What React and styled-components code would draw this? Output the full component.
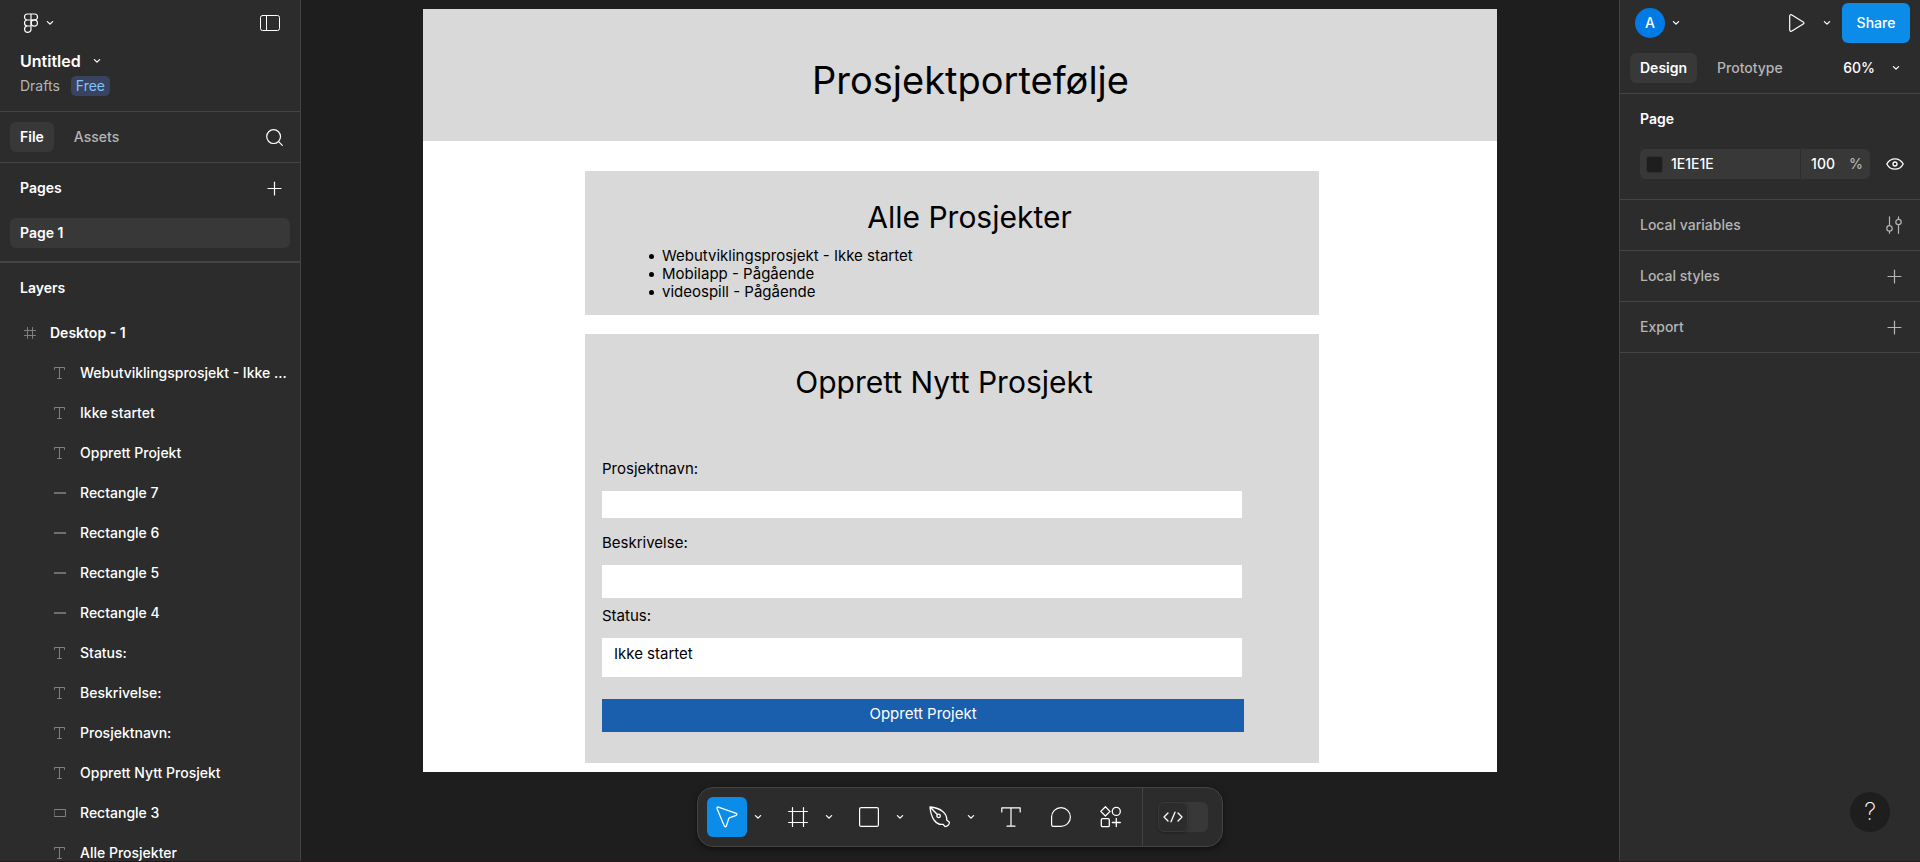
import React from "react";
import styled, { createGlobalStyle } from "styled-components";

const c = {
  panel: "#2c2c2c",
  canvas: "#1e1e1e",
  edge: "#22171c",
  line: "#444444",
  selected: "#383838",
  text: "#ffffff",
  muted: "#b5b5b5",
  faint: "#808080",
  blue: "#0c8ce9",
  avatar: "#007be5",
  block: "#d9d9d9",
  action: "#1a5fad",
};

const GlobalStyle = createGlobalStyle`
  *, *::before, *::after { box-sizing: border-box; }
  body {
    margin: 0;
    background: ${c.canvas};
    color: ${c.text};
    font: 500 14px/20px Inter, "Liberation Sans", sans-serif;
  }
  button, input, select { font: inherit; color: inherit; margin: 0; padding: 0; border: 0; background: none; }
  button { cursor: pointer; }
  h1, h2, h3, p, ul { margin: 0; padding: 0; font-size: inherit; font-weight: inherit; }
`;

/* ---------- icons ---------- */

const Svg = styled.svg`
  display: block;
  flex: none;
  fill: none;
  stroke: currentColor;
  stroke-width: ${(p) => p.$stroke || 1.2};
  stroke-linecap: round;
  stroke-linejoin: round;
`;

const Icon = ({ w, h, stroke, children }) => (
  <Svg width={w} height={h} viewBox={`0 0 ${w} ${h}`} $stroke={stroke} aria-hidden="true">
    {children}
  </Svg>
);

const Chevron = () => (
  <Icon w={8} h={6} stroke={1.3}>
    <path d="M1.400 1.600 4 4.100 6.600 1.600" />
  </Icon>
);
const Logo = () => (
  <Icon w={16} h={20}>
    <path d="M8 1H4.500a3 3 0 0 0 0 6H8zM8 1h3.500a3 3 0 0 1 0 6H8zM8 7H4.500a3 3 0 0 0 0 6H8zM4.500 13H8v3a3.200 3.200 0 1 1-3.500-3z" />
    <circle cx="11.300" cy="10" r="3.100" />
  </Icon>
);
const PanelIcon = () => (
  <Icon w={20} h={16} stroke={1}>
    <rect x="0.5" y="0.5" width="19" height="15" rx="2" />
    <path d="M6.500.5v15" />
  </Icon>
);
const SearchIcon = () => (
  <Icon w={17} h={17}>
    <circle cx="7.600" cy="7.600" r="6.900" />
    <path d="m12.600 12.600 3.700 3.700" />
  </Icon>
);
const PlusIcon = () => (
  <Icon w={15} h={15}>
    <path d="M7.500 1v13M1 7.500h13" />
  </Icon>
);
const LayerFrame = () => (
  <Icon w={12} h={12} stroke={1}>
    <path d="M3.500.5v11M8.500.5v11M.5 3.500h11M.5 8.500h11" />
  </Icon>
);
const LayerText = () => (
  <Icon w={12} h={12} stroke={1}>
    <path d="M.5 2.500v-2h10v2M5.500.5v11M3.500 11.500h4" />
  </Icon>
);
const LayerLine = () => (
  <Icon w={12} h={12} stroke={1.6}>
    <path strokeLinecap="butt" d="M0 6h12" />
  </Icon>
);
const LayerRect = () => (
  <Icon w={12} h={12} stroke={1}>
    <rect x="0.5" y="2.5" width="11" height="7" />
  </Icon>
);
const PlayIcon = () => (
  <Icon w={16} h={18}>
    <path d="M.7 2.200v13.600c0 1.300 1.200 1.900 2.200 1.300l11.300-7c1-.6 1-1.600 0-2.200L2.900.9C1.900.3.7.9.7 2.200z" />
  </Icon>
);
const EyeIcon = () => (
  <Icon w={18} h={12} stroke={1.300}>
    <path d="M.8 6C2.600 2.600 5.600.8 9 .8S15.400 2.600 17.200 6C15.400 9.400 12.400 11.200 9 11.200S2.600 9.400.8 6z" />
    <circle cx="9" cy="6" r="2" />
  </Icon>
);
const SlidersIcon = () => (
  <Icon w={16} h={18}>
    <path d="M3.500.8v8.700M3.500 15.300v2M12.500.8v2.500M12.500 9v8.300" />
    <circle cx="3.500" cy="12.400" r="2.700" />
    <circle cx="12.500" cy="6" r="2.700" />
  </Icon>
);
const CursorIcon = () => (
  <Icon w={22} h={22} stroke={1.300}>
    <path d="M2.400 1.100 20.200 7.300q1.500 1 0 2.100l-6.300 2.200q-.9.300-1.300 1.300l-2.200 7q-1 1.700-2.100 0L1 2.600Q.7.600 2.400 1.100z" />
  </Icon>
);
const FrameIcon = () => (
  <Icon w={20} h={20}>
    <path d="M4.500.6v18.800M15.500.6v18.800M.6 4.500h18.800M.6 15.500h18.800" />
  </Icon>
);
const SquareIcon = () => (
  <Icon w={20} h={20}>
    <rect x="0.600" y="0.600" width="18.800" height="18.800" rx="1.500" />
  </Icon>
);
const PenIcon = () => (
  <Icon w={22} h={22} stroke={1.300}>
    <path d="M1 1c5 .4 9.600 1.800 12.700 4.400 3.300 2.800 4.300 6 4 8.600l2.700 2.300c0 2.200-1.900 4.100-4.300 4.300L14 18.300c-3.300.5-6.600-1-9-4.300C2.600 10.500 1.400 6 1 1zM1.500 1.500l6.900 7" />
    <circle cx="9.600" cy="9.900" r="1.700" />
  </Icon>
);
const TextIcon = () => (
  <Icon w={20} h={20}>
    <path d="M.8 5V.8h18.400V5M10 .8v18.400M6 19.200h8" />
  </Icon>
);
const CommentIcon = () => (
  <Icon w={20} h={20}>
    <path d="M.6 17.800V10A9.400 9.400 0 1 1 10 19.400H2.200Q.6 19.400.6 17.800z" />
  </Icon>
);
const ActionsIcon = () => (
  <Icon w={22} h={22} stroke={1.300}>
    <path d="M5.400.8 10 5.400 5.400 10 .8 5.400zM16.300 12.500v8M12.300 16.500h8" />
    <circle cx="16.300" cy="5.400" r="4" />
    <rect x="1.300" y="12.700" width="8" height="8" rx="1.200" />
  </Icon>
);
const CodeIcon = () => (
  <Icon w={20} h={12} stroke={1.300}>
    <path d="M5 2 1 6l4 4M15 2l4 4-4 4M12 1.200 8 10.800" />
  </Icon>
);

/* ---------- shell ---------- */

const Shell = styled.div`
  display: grid;
  grid-template-columns: 301px minmax(0, 1fr) 301px;
  grid-template-rows: minmax(0, 1fr);
  height: 100vh;
  border-bottom: 1px solid ${c.edge};
  overflow: hidden;
`;

const Panel = styled.aside`
  display: flex;
  flex-direction: column;
  min-height: 0;
  overflow: hidden;
  background: ${c.panel};
  border: 0 solid ${c.line};
  border-width: ${(p) => (p.$side === "left" ? "0 1px 0 0" : "0 0 0 1px")};
`;

const Bar = styled.div`
  display: flex;
  flex: none;
  align-items: center;
  justify-content: space-between;
`;

const IconButton = styled.button`
  display: flex;
  align-items: center;
  justify-content: center;
  width: 30px;
  height: 30px;
  color: ${(p) => (p.$muted ? c.muted : c.text)};
`;

const Tab = styled.button`
  height: 30px;
  padding: 0 10px;
  border-radius: 6px;
  font-weight: ${(p) => (p.$active ? 600 : 500)};
  color: ${(p) => (p.$active ? c.text : c.muted)};
  background: ${(p) => (p.$active ? c.selected : "transparent")};
`;

const Tabs = styled.nav`
  display: flex;
  gap: 10px;
`;

const Heading = styled.h2`
  font-weight: 600;
`;

/* ---------- left panel ---------- */

const FileHeader = styled.header`
  flex: none;
  height: 112px;
  border-bottom: 1px solid ${c.line};
`;

const MenuRow = styled(Bar)`
  height: 46px;
  padding: 0 15px 0 23px;
`;

const MenuButton = styled.button`
  display: flex;
  align-items: center;
  gap: 7px;
  height: 30px;
`;

const FileName = styled.button`
  display: flex;
  align-items: center;
  gap: 12px;
  height: 30px;
  padding: 0 20px;
  font-size: 16px;
  font-weight: 600;
`;

const FileMeta = styled.div`
  display: flex;
  align-items: center;
  gap: 11px;
  padding: 0 20px;
  font-weight: 400;
  color: ${c.muted};
`;

const Badge = styled.span`
  padding: 0 5px;
  border-radius: 5px;
  background: #394360;
  color: #7cc4f8;
`;

const TabRow = styled(Bar)`
  height: 51px;
  padding: 0 11px 0 10px;
  border-bottom: 1px solid ${c.line};
`;

const Pages = styled.section`
  flex: none;
  padding: 10px 10px 13px;
  border-bottom: 2px solid ${c.line};
`;

const PagesHead = styled(Bar)`
  height: 30px;
  padding: 0 1px 0 10px;
  margin-bottom: 15px;
`;

const PageRow = styled.button`
  width: 100%;
  height: 30px;
  padding: 0 10px;
  border-radius: 6px;
  background: ${c.selected};
  text-align: left;
  font-weight: 600;
`;

const Layers = styled.section`
  min-height: 0;
  padding: 15px 10px 0 20px;
  overflow: hidden;

  ul {
    margin-top: 15px;
    list-style: none;
  }
`;

const LayerRow = styled.li`
  display: flex;
  align-items: center;
  gap: 14px;
  height: 40px;
  padding-left: ${(p) => (p.$top ? 4 : 34)}px;
  font-weight: ${(p) => (p.$top ? 600 : 500)};
  white-space: nowrap;

  svg {
    color: ${c.faint};
  }
`;

const layers = [
  ["text", "Webutviklingsprosjekt - Ikke ..."],
  ["text", "Ikke startet"],
  ["text", "Opprett Projekt"],
  ["line", "Rectangle 7"],
  ["line", "Rectangle 6"],
  ["line", "Rectangle 5"],
  ["line", "Rectangle 4"],
  ["text", "Status:"],
  ["text", "Beskrivelse:"],
  ["text", "Prosjektnavn:"],
  ["text", "Opprett Nytt Prosjekt"],
  ["rect", "Rectangle 3"],
  ["text", "Alle Prosjekter"],
];
const layerIcons = { text: LayerText, line: LayerLine, rect: LayerRect };

const LeftPanel = () => (
  <Panel $side="left">
    <FileHeader>
      <MenuRow>
        <MenuButton aria-label="Main menu">
          <Logo />
          <Chevron />
        </MenuButton>
        <IconButton aria-label="Minimize UI">
          <PanelIcon />
        </IconButton>
      </MenuRow>
      <FileName>
        Untitled
        <Chevron />
      </FileName>
      <FileMeta>
        Drafts <Badge>Free</Badge>
      </FileMeta>
    </FileHeader>
    <TabRow>
      <Tabs>
        <Tab $active>File</Tab>
        <Tab>Assets</Tab>
      </Tabs>
      <IconButton aria-label="Search">
        <SearchIcon />
      </IconButton>
    </TabRow>
    <Pages>
      <PagesHead>
        <Heading>Pages</Heading>
        <IconButton aria-label="Add page">
          <PlusIcon />
        </IconButton>
      </PagesHead>
      <PageRow>Page 1</PageRow>
    </Pages>
    <Layers>
      <Heading>Layers</Heading>
      <ul>
        <LayerRow $top>
          <LayerFrame />
          <span>Desktop - 1</span>
        </LayerRow>
        {layers.map(([kind, name]) => {
          const Glyph = layerIcons[kind];
          return (
            <LayerRow key={name}>
              <Glyph />
              <span>{name}</span>
            </LayerRow>
          );
        })}
      </ul>
    </Layers>
  </Panel>
);

/* ---------- canvas ---------- */

const Canvas = styled.main`
  position: relative;
  min-width: 0;
  padding: 9px 122px 0;
  overflow: hidden;
`;

const Artboard = styled.article`
  background: #ffffff;
  color: #000000;
  font-size: 15px;
  font-weight: 400;
  line-height: 18px;
  padding-bottom: 9px;
`;

const Banner = styled.header`
  padding: 48px 0 38px 21px;
  background: ${c.block};
  text-align: center;

  h1 {
    font-size: 38px;
    line-height: 46px;
  }
`;

const Block = styled.section`
  margin: ${(p) => p.$top}px 178px 0 162px;
  background: ${c.block};
`;

const BlockTitle = styled.h2`
  font-size: 30px;
  line-height: 36px;
  text-align: center;
`;

const Projects = styled(Block)`
  padding: 28px 0 14px;

  ${BlockTitle} {
    padding-left: 35px;
  }
  ul {
    margin-top: 12px;
    padding-left: 64px;
    list-style: none;
  }
  li {
    display: flex;
    align-items: center;
    gap: 8px;
  }
  li::before {
    content: "";
    width: 5px;
    height: 5px;
    border-radius: 50%;
    background: #000000;
  }
`;

const NewProject = styled(Block)`
  padding: 30px 77px 31px 17px;

  ${BlockTitle} {
    padding-left: 44px;
    margin-bottom: 60px;
  }
`;

const Field = styled.div`
  margin-bottom: ${(p) => p.$gap}px;

  label {
    display: block;
    margin-bottom: 13px;
  }
  input,
  select {
    display: block;
    width: 100%;
    height: ${(p) => p.$h}px;
    padding: 0 12px 7px;
    border-radius: 0;
    background: #ffffff;
    appearance: none;
    outline: none;
  }
`;

const Submit = styled.button`
  display: block;
  width: calc(100% + 2px);
  height: 33px;
  padding-bottom: 4px;
  background: ${c.action};
  color: #ffffff;
`;

const Design = () => (
  <Artboard>
    <Banner>
      <h1>Prosjektportefølje</h1>
    </Banner>
    <Projects $top={30}>
      <BlockTitle>Alle Prosjekter</BlockTitle>
      <ul>
        <li>Webutviklingsprosjekt - Ikke startet</li>
        <li>Mobilapp - Pågående</li>
        <li>videospill - Pågående</li>
      </ul>
    </Projects>
    <NewProject $top={19}>
      <BlockTitle>Opprett Nytt Prosjekt</BlockTitle>
      <Field $h={27} $gap={16}>
        <label htmlFor="name">Prosjektnavn:</label>
        <input id="name" type="text" />
      </Field>
      <Field $h={33} $gap={9}>
        <label htmlFor="description">Beskrivelse:</label>
        <input id="description" type="text" />
      </Field>
      <Field $h={39} $gap={22}>
        <label htmlFor="status">Status:</label>
        <select id="status">
          <option>Ikke startet</option>
        </select>
      </Field>
      <Submit>Opprett Projekt</Submit>
    </NewProject>
  </Artboard>
);

const Dock = styled.div`
  position: absolute;
  bottom: 14px;
  left: 50%;
  transform: translateX(-50%);
  display: flex;
  height: 60px;
  border: 1px solid ${c.line};
  border-radius: 16px;
  background: ${c.panel};
  box-shadow: 0 2px 6px rgba(0, 0, 0, 0.5);
`;

const Tools = styled.div`
  display: flex;
  align-items: center;
  gap: 10px;
  padding: 0 11px 0 9px;
`;

const ToolGroup = styled.div`
  display: flex;
`;

const Tool = styled.button`
  display: flex;
  align-items: center;
  justify-content: center;
  width: 40px;
  height: 40px;
  border-radius: 6px;
  background: ${(p) => (p.$active ? c.blue : "transparent")};
`;

const ToolMenu = styled.button`
  display: flex;
  align-items: center;
  justify-content: center;
  width: 21px;
  height: 40px;
`;

const DevArea = styled.div`
  display: flex;
  align-items: center;
  padding: 0 14px 0 15px;
  border-left: 1px solid ${c.line};
`;

const DevToggle = styled.label`
  position: relative;
  display: flex;
  align-items: center;
  width: 50px;
  height: 30px;
  border-radius: 6px;
  background: ${c.selected};

  input {
    position: absolute;
    inset: 0;
    opacity: 0;
  }
`;

const DevKnob = styled.span`
  display: flex;
  align-items: center;
  justify-content: center;
  width: 30px;
  height: 30px;
  border: 1px solid ${c.selected};
  border-radius: 6px;
  background: ${c.panel};
  box-shadow: 0 1px 3px rgba(0, 0, 0, 0.3);
`;

const tools = [
  ["Move", CursorIcon, true],
  ["Frame", FrameIcon, true],
  ["Rectangle", SquareIcon, true],
  ["Pen", PenIcon, true],
  ["Text", TextIcon, false],
  ["Comment", CommentIcon, false],
  ["Actions", ActionsIcon, false],
];

const Toolbar = () => (
  <Dock>
    <Tools>
      {tools.map(([name, Glyph, menu], i) => (
        <ToolGroup key={name}>
          <Tool aria-label={name} $active={i === 0}>
            <Glyph />
          </Tool>
          {menu && (
            <ToolMenu aria-label={`${name} tools`}>
              <Chevron />
            </ToolMenu>
          )}
        </ToolGroup>
      ))}
    </Tools>
    <DevArea>
      <DevToggle>
        <input type="checkbox" aria-label="Dev Mode" />
        <DevKnob>
          <CodeIcon />
        </DevKnob>
      </DevToggle>
    </DevArea>
  </Dock>
);

/* ---------- right panel ---------- */

const RightPanelBody = styled(Panel)`
  position: relative;
`;

const Account = styled(Bar)`
  height: 46px;
  padding: 0 10px 0 15px;
`;

const AccountMenu = styled.button`
  display: flex;
  align-items: center;
  gap: 7px;
`;

const Avatar = styled.span`
  width: 30px;
  height: 30px;
  border-radius: 50%;
  background: ${c.avatar};
  line-height: 30px;
  text-align: center;
`;

const ShareGroup = styled.div`
  display: flex;
  align-items: center;
`;

const Share = styled.button`
  width: 68px;
  height: 40px;
  border-radius: 6px;
  background: ${c.blue};
`;

const ModeRow = styled(Bar)`
  align-items: flex-start;
  height: 48px;
  padding: 7px 20px 0 10px;
  border-bottom: 1px solid ${c.line};
`;

const Zoom = styled.button`
  display: flex;
  align-items: center;
  gap: 17px;
  height: 30px;
`;

const PageProps = styled.section`
  padding: 15px 10px 20px 20px;
  border-bottom: 1px solid ${c.line};
`;

const FillRow = styled(Bar)`
  margin-top: 20px;
`;

const Fill = styled.div`
  display: flex;
  align-items: stretch;
  width: 230px;
  height: 30px;
  border-radius: 6px;
  background: ${c.selected};
  overflow: hidden;
`;

const FillColor = styled.label`
  display: flex;
  flex: 1;
  align-items: center;
  gap: 8px;
  padding-left: 6px;
  border-right: 1px solid ${c.panel};

  input {
    width: 100px;
  }
`;

const Swatch = styled.span`
  width: 17px;
  height: 17px;
  border: 1px solid #303030;
  border-radius: 3px;
  background: ${c.canvas};
`;

const FillAlpha = styled.label`
  display: flex;
  align-items: center;
  gap: 9px;
  padding: 0 7px 0 10px;
  color: ${c.muted};

  input {
    width: 29px;
    color: ${c.text};
  }
`;

const PropRow = styled(Bar)`
  height: 51px;
  padding: 0 11px 0 20px;
  border-bottom: 1px solid ${c.line};
  color: ${c.muted};
`;

const Help = styled.button`
  position: absolute;
  right: 30px;
  bottom: 29px;
  width: 40px;
  height: 40px;
  border-radius: 50%;
  background: ${c.canvas};
  font-size: 24px;
  font-weight: 200;
`;

const RightPanel = () => (
  <RightPanelBody $side="right">
    <Account>
      <AccountMenu aria-label="Account">
        <Avatar>A</Avatar>
        <Chevron />
      </AccountMenu>
      <ShareGroup>
        <IconButton aria-label="Present">
          <PlayIcon />
        </IconButton>
        <IconButton aria-label="Present options">
          <Chevron />
        </IconButton>
        <Share>Share</Share>
      </ShareGroup>
    </Account>
    <ModeRow>
      <Tabs>
        <Tab $active>Design</Tab>
        <Tab>Prototype</Tab>
      </Tabs>
      <Zoom>
        60%
        <Chevron />
      </Zoom>
    </ModeRow>
    <PageProps>
      <Heading>Page</Heading>
      <FillRow>
        <Fill>
          <FillColor>
            <Swatch />
            <input type="text" defaultValue="1E1E1E" aria-label="Page color" />
          </FillColor>
          <FillAlpha>
            <input type="text" defaultValue="100" aria-label="Opacity" />%
          </FillAlpha>
        </Fill>
        <IconButton aria-label="Toggle visibility">
          <EyeIcon />
        </IconButton>
      </FillRow>
    </PageProps>
    <PropRow>
      Local variables
      <IconButton $muted aria-label="Open variables">
        <SlidersIcon />
      </IconButton>
    </PropRow>
    <PropRow>
      Local styles
      <IconButton $muted aria-label="Create style">
        <PlusIcon />
      </IconButton>
    </PropRow>
    <PropRow>
      Export
      <IconButton $muted aria-label="Add export">
        <PlusIcon />
      </IconButton>
    </PropRow>
    <Help aria-label="Help">?</Help>
  </RightPanelBody>
);

export default function App() {
  return (
    <>
      <GlobalStyle />
      <Shell>
        <LeftPanel />
        <Canvas>
          <Design />
          <Toolbar />
        </Canvas>
        <RightPanel />
      </Shell>
    </>
  );
}
